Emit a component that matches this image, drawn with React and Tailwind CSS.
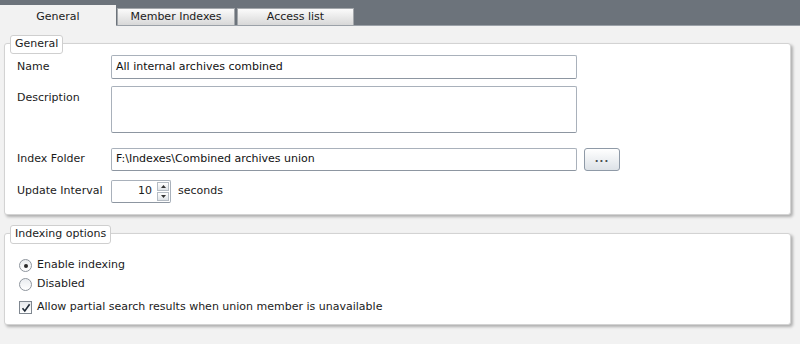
import React from 'react';

const font = { fontFamily: '"DejaVu Sans", Verdana, sans-serif' };

const Legend = ({ children }) => (
  <div className="absolute -top-[9px] left-[5px] h-[19px] px-[4px] flex items-center bg-white border border-[#cfcfcf] rounded-[3px] text-[11px] text-[#1b1b1b]">
    {children}
  </div>
);

const TextBox = ({ value, className = '' }) => (
  <div className={`flex items-center px-[4px] bg-white border border-[#a9b1bb] border-b-[#8d96a1] rounded-[2px] text-[11px] text-[#111] ${className}`}>
    {value}
  </div>
);

const Radio = ({ checked }) => (
  <span className="w-[13px] h-[13px] rounded-full border border-[#8e959d] bg-gradient-to-b from-[#e9ecef] to-[#ffffff] flex items-center justify-center">
    {checked && <span className="w-[4px] h-[4px] rounded-full bg-[#2a2a2a]" />}
  </span>
);

const Check = () => (
  <span className="w-[13px] h-[13px] border border-[#7f8790] bg-gradient-to-b from-[#e6e9ec] to-white flex items-center justify-center">
    <svg width="10" height="10" viewBox="0 0 10 10">
      <path d="M1.5 5.2 L3.8 8 L8.6 1.2" fill="none" stroke="#1f2a36" strokeWidth="1.6" />
    </svg>
  </span>
);

export default function App() {
  return (
    <div className="w-[800px] h-[344px] bg-[#f2f2f2] overflow-hidden" style={font}>
      {/* Tab strip */}
      <div className="h-[26px] bg-[#6c737b] border-b border-[#9ba1a8] flex items-end pl-0 gap-[1px]">
        <div className="w-[116px] h-[21px] bg-[#f2f2f2] flex items-center justify-center text-[11px] text-[#1b1b1b] -mb-[1px] pt-[3px]">
          General
        </div>
        <div className="w-[118px] h-[17px] bg-gradient-to-b from-[#fbfbfb] to-[#d8d8d8] border border-[#a3a7ab] border-b-0 flex items-center justify-center text-[11px] text-[#1b1b1b]">
          Member Indexes
        </div>
        <div className="ml-[1px] w-[117px] h-[17px] bg-gradient-to-b from-[#fbfbfb] to-[#d8d8d8] border border-[#a3a7ab] border-b-0 flex items-center justify-center text-[11px] text-[#1b1b1b]">
          Access list
        </div>
      </div>

      {/* General group */}
      <div className="relative ml-[4px] mt-[17px] w-[787px] h-[172px] bg-white border border-[#d3d3d3] rounded-[3px] shadow-[2px_2px_3px_rgba(0,0,0,0.28)] pl-[12px] pt-[11px] text-[11px] text-[#1b1b1b]">
        <Legend>General</Legend>
        <div className="flex items-center h-[24px]">
          <span className="w-[94px]">Name</span>
          <TextBox value="All internal archives combined" className="w-[466px] h-[24px]" />
        </div>
        <div className="flex mt-[7px] h-[47px]">
          <span className="w-[94px] pt-[4px]">Description</span>
          <TextBox value="" className="w-[466px] h-[47px]" />
        </div>
        <div className="flex items-center mt-[15px] h-[23px]">
          <span className="w-[94px]">Index Folder</span>
          <TextBox value="F:\Indexes\Combined archives union" className="w-[466px] h-[23px]" />
          <div className="ml-[7px] w-[36px] h-[23px] rounded-[3px] border border-[#8f9aa7] bg-gradient-to-b from-white to-[#dde2e7] flex items-center justify-center text-[10px] font-bold text-[#4a4f55] tracking-[1px] pb-[3px]">
            ...
          </div>
        </div>
        <div className="flex items-center mt-[9px] h-[23px]">
          <span className="w-[94px]">Update Interval</span>
          <div className="flex w-[60px] h-[23px] bg-white border border-[#a9b1bb] border-b-[#8d96a1] rounded-[2px]">
            <span className="flex-1 flex items-center justify-end pr-[4px]">10</span>
            <div className="w-[14px] flex flex-col p-[1px] gap-[1px]">
              <span className="flex-1 flex items-center justify-center border border-[#b5bcc4] bg-gradient-to-b from-white to-[#dfe3e7]">
                <svg width="5" height="3" viewBox="0 0 5 3"><path d="M0 3 L2.5 0 L5 3Z" fill="#333" /></svg>
              </span>
              <span className="flex-1 flex items-center justify-center border border-[#b5bcc4] bg-gradient-to-b from-white to-[#dfe3e7]">
                <svg width="5" height="3" viewBox="0 0 5 3"><path d="M0 0 L2.5 3 L5 0Z" fill="#333" /></svg>
              </span>
            </div>
          </div>
          <span className="ml-[7px]">seconds</span>
        </div>
      </div>

      {/* Indexing options group */}
      <div className="relative ml-[4px] mt-[18px] w-[787px] h-[92px] bg-white border border-[#d3d3d3] rounded-[3px] shadow-[2px_2px_3px_rgba(0,0,0,0.28)] pl-[14px] pt-[23px] text-[11px] text-[#1b1b1b]">
        <Legend>Indexing options</Legend>
        <div className="flex items-center gap-[5px] h-[17px]">
          <Radio checked />
          <span>Enable indexing</span>
        </div>
        <div className="flex items-center gap-[5px] h-[17px] mt-[2px]">
          <Radio />
          <span>Disabled</span>
        </div>
        <div className="flex items-center gap-[5px] h-[17px] mt-[6px]">
          <Check />
          <span>Allow partial search results when union member is unavailable</span>
        </div>
      </div>
    </div>
  );
}
